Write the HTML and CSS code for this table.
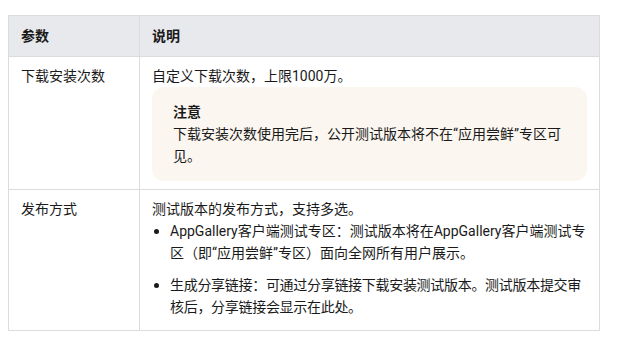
FILE: index.html
```html
<!DOCTYPE html>
<html lang="zh-CN">
<head>
    <meta charset="UTF-8">
    <meta name="viewport" content="width=device-width, initial-scale=1.0">
    <title>参数说明</title>
    <link rel="stylesheet" href="styles.css">
</head>
<body>

    <!-- Parameter Table -->
    <table class="param-table">
        <thead>
            <tr>
                <th class="col-name">参数</th>
                <th>说明</th>
            </tr>
        </thead>
        <tbody>
            <tr>
                <td>下载安装次数</td>
                <td>
                    <p>自定义下载次数，上限1000万。</p>
                    <div class="notice">
                        <div class="notice-title">注意</div>
                        <p>下载安装次数使用完后，公开测试版本将不在“应用尝鲜”专区可见。</p>
                    </div>
                </td>
            </tr>
            <tr>
                <td>发布方式</td>
                <td>
                    <p>测试版本的发布方式，支持多选。</p>
                    <ul class="dot-list">
                        <li><span>AppGallery客户端测试专区：测试版本将在AppGallery客户端测试专区（即“应用尝鲜”专区）面向全网所有用户展示。</span></li>
                        <li class="compact"><span>生成分享链接：可通过分享链接下载安装测试版本。测试版本提交审核后，分享链接会显示在此处。</span></li>
                    </ul>
                </td>
            </tr>
        </tbody>
    </table>

</body>
</html>
```

FILE: styles.css
```css
body {
    font-family: 'Roboto', 'Noto Sans CJK SC', sans-serif;
    font-size: 14px;
    line-height: 22px;
    color: #1a1a1a;
    background-color: #fff;
    margin: 0;
    padding: 15px 0 0 8px;
}
.param-table {
    width: 592px;
    border-collapse: collapse;
}
.param-table th, .param-table td {
    border: 1px solid #dcdcdc;
    padding: 8px 12px;
    text-align: left;
    vertical-align: top;
}
.param-table th {
    background-color: #e8e9ec;
    font-weight: 700;
    padding: 9px 12px;
}
.col-name {
    width: 106px;
}
.param-table p {
    margin: 0;
}
.notice {
    background-color: #fbf6f0;
    border-radius: 12px;
    padding: 14px 15px 14px 21px;
}
.notice-title {
    font-weight: 700;
}
.dot-list {
    list-style: none;
    margin: 0 0 4px 0;
    padding: 0;
}
.dot-list li {
    display: flex;
    margin-top: 0;
    margin-bottom: 10px;
}
.dot-list li:last-child {
    margin-bottom: 0;
}
.dot-list li.compact span {
    letter-spacing: -0.3px;
}
.dot-list li::before {
    content: '';
    flex: none;
    width: 5px;
    height: 5px;
    border-radius: 50%;
    background-color: #1a1a1a;
    margin: 9px 11px 0 2px;
}
```
